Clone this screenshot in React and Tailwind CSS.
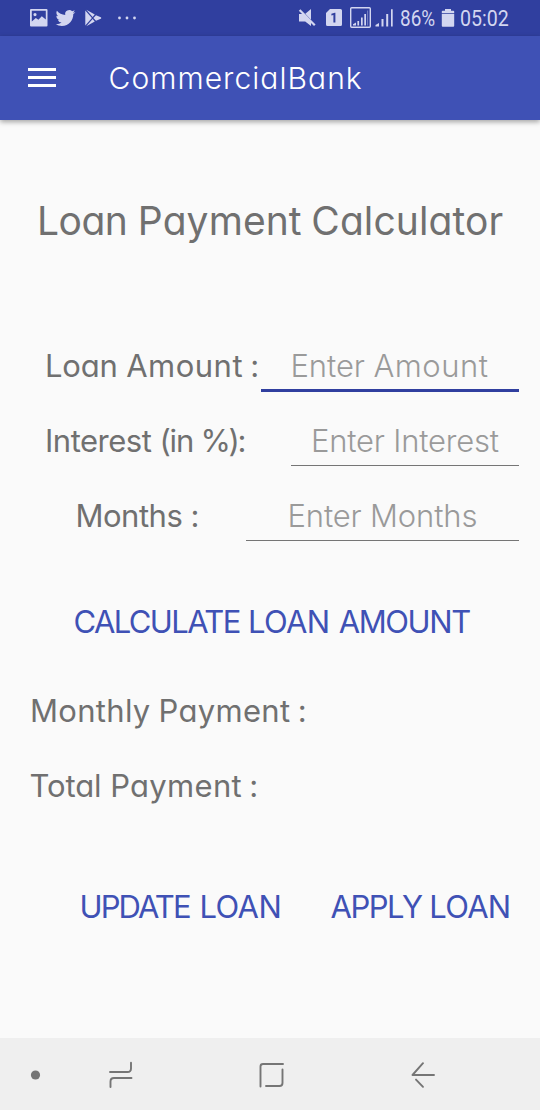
function StatusIcons() {
  return (
    <svg className="h-9 w-[150px]" viewBox="0 0 150 36" fill="#d3d6f0">
      <path
        fillRule="evenodd"
        d="M31 9h15.5a1 1 0 0 1 1 1v15.5a1 1 0 0 1-1 1H31a1 1 0 0 1-1-1V10a1 1 0 0 1 1-1zM31.8 10.8v10.6l4-3.4 2.6 1.8 3.4-3.6 4 3.4v-8.800zM35 13a1.600 1.600 0 1 1 0 3.200 1.600 1.600 0 0 1 0-3.200z"
      />
      <path
        transform="translate(55.6 8.2) scale(0.82)"
        d="M23.953 4.57a10 10 0 01-2.825.775 4.958 4.958 0 002.163-2.723c-.951.555-2.005.959-3.127 1.184a4.92 4.92 0 00-8.384 4.482C7.69 8.095 4.067 6.13 1.64 3.162a4.822 4.822 0 00-.666 2.475c0 1.71.87 3.213 2.188 4.096a4.904 4.904 0 01-2.228-.616v.06a4.923 4.923 0 003.946 4.827 4.996 4.996 0 01-2.212.085 4.936 4.936 0 004.604 3.417 9.867 9.867 0 01-6.102 2.105c-.39 0-.779-.023-1.17-.067a13.995 13.995 0 007.557 2.209c9.053 0 13.998-7.496 13.998-13.985 0-.21 0-.42-.015-.63A9.935 9.935 0 0024 4.59z"
      />
      <path d="M85.3 10.4v15.2l6.6-7.6zM86.3 9.7l6.3 7.3 2.2-2.4zM86.3 26.3l6.3-7.3 2.2 2.4zM96 15.2 93.4 18l2.6 2.8 4.8-2.1a.8.8 0 0 0 0-1.4z" />
      <circle cx="119.5" cy="18" r="1.4" />
      <circle cx="127" cy="18" r="1.4" />
      <circle cx="134.5" cy="18" r="1.4" />
    </svg>
  );
}

function SignalIcons() {
  return (
    <svg className="h-9 w-[99px]" viewBox="296 0 99 36" fill="#d3d6f0">
      <path d="M299 14h5l7 7.500v4.600l-5.800-4.600H299zM305.300 13.800l5.700-4.800v10.800z" />
      <path d="m299.600 10 15.200 15.200" stroke="#d3d6f0" strokeWidth="2.200" fill="none" />
      <path
        fillRule="evenodd"
        d="M330 9h10.5a1.5 1.5 0 0 1 1.5 1.5v14a1.5 1.5 0 0 1-1.5 1.5h-13a1.5 1.5 0 0 1-1.5-1.5V13zM331.4 13.8v1.8l2-.6v7.6h2v-9.8h-.6z"
      />
      <rect x="350.7" y="7.7" width="19.6" height="19.6" rx="1" fill="none" stroke="#d3d6f0" strokeWidth="1.4" />
      <path d="M353 25.500v-1.300l3-1.700v3zM357.400 21h1.700v4.500h-1.700zM361 17.500h1.700v8H361zM364.300 14h1.700v11.500h-1.700z" />
      <path d="M367.200 10.500h.9v15h-.9z" opacity=".5" />
      <path d="M375.5 26.5V25l3.5-2v3.5zM381.5 19h2v7.5h-2zM386.2 14h2v12.5h-2zM391 9.2h1.7v17.3H391z" />
    </svg>
  );
}

function BatteryIcon() {
  return (
    <svg className="h-9 w-[14px]" viewBox="0 0 14 36" fill="#d3d6f0">
      <path d="M4 9h6v1.800h2.400a.8.8 0 0 1 .8.8V13H.8v-1.400a.8.8 0 0 1 .8-.8H4zM.8 13.800h12.400v12a.9.9 0 0 1-.9.9H1.700a.9.9 0 0 1-.9-.9z" />
    </svg>
  );
}

function StatusBar() {
  return (
    <header className="flex h-9 items-center bg-[#303f9f] font-['Roboto',sans-serif] text-[22px] leading-9 text-[#d3d6f0]">
      <StatusIcons />
      <div className="w-[146px]" />
      <SignalIcons />
      <span className="ml-[4.5px] w-[41px] origin-left scale-x-[0.86] pt-[2px]">86%</span>
      <BatteryIcon />
      <span className="ml-[5px] origin-left scale-x-[0.89] pt-[2px]">05:02</span>
    </header>
  );
}

function AppBar() {
  return (
    <div className="flex h-[84px] items-center bg-[#3f51b5] pl-7 text-white shadow-[0_2px_5px_rgba(0,0,0,0.35)]">
      <div className="flex w-7 flex-col gap-[5px] pb-[1px]">
        <span className="h-[3px] bg-white" />
        <span className="h-[3px] bg-white" />
        <span className="h-[3px] bg-white" />
      </div>
      <h1 className="ml-[52.5px] text-[30px] font-light tracking-[1.05px]">CommercialBank</h1>
    </div>
  );
}

function NavBar() {
  return (
    <nav className="flex h-[72px] bg-[#efefef]">
      <svg className="h-[72px] w-[540px]" viewBox="0 1038 540 72" fill="none" stroke="#757575" strokeWidth="1.9" strokeLinecap="round">
        <circle cx="35.5" cy="1075" r="4.6" fill="#757575" stroke="none" />
        <path d="M110 1072h17.5q3.5 0 3.5-3.5V1062.7M131.5 1078h-17.5q-3.5 0-3.5 3.5V1087" />
        <path d="M260.5 1086.5V1066.5q0-2.5 2.5-2.500H283M282.500 1069.500V1083q0 3-3 3H266" />
        <path d="M434 1075H412.500L423 1063.200M416 1079.600l7 7.200" strokeLinejoin="round" />
      </svg>
    </nav>
  );
}

export default function App() {
  return (
    <div className="flex h-[1110px] w-[540px] flex-col overflow-hidden whitespace-nowrap bg-[#fafafa] font-['Inter',sans-serif] text-[31px] text-[#707070] [font-feature-settings:'cv11']">
      <StatusBar />
      <AppBar />
      <main className="flex flex-1 flex-col">
        <h2 className="h-[209px] pl-[37px] text-[39px] leading-[201px]">
          <span className="tracking-[-0.5px]">Loan </span>
          <span className="tracking-[0.1px]">Payment </span>
          <span className="ml-[-1.5px] tracking-[0.1px]">Calculator</span>
        </h2>

        <div className="flex h-[75px] leading-[74px]">
          <label className="w-[261px] pl-[45px]">
            <span className="tracking-[-0.2px]">Loan </span>
            <span className="tracking-[0.5px]">Amount</span>
            <span className="tracking-[-1.5px]"> :</span>
          </label>
          <div className="h-[63px] w-[258px] border-b-3 border-[#303f9f] pl-[29.5px] font-light text-[#9a9a9a]">
            <span className="tracking-[-0.1px]">Enter </span>
            <span className="tracking-[0.5px]">Amount</span>
          </div>
        </div>
        <div className="flex h-[75px] leading-[74px]">
          <label className="w-[291px] pl-[45px]">
            <span className="tracking-[-0.5px]">Interest </span>
            <span className="tracking-[-1.2px]">(in </span>
            <span className="tracking-[-2.4px]">%):</span>
          </label>
          <div className="h-[62px] w-[228px] border-b border-[#757575] pl-[20px] font-light tracking-[-0.2px] text-[#9a9a9a]">Enter Interest</div>
        </div>
        <div className="flex h-[75px] leading-[74px]">
          <label className="w-[246px] pl-[75.5px] tracking-[-0.5px]">Months :</label>
          <div className="h-[62px] w-[273px] border-b border-[#757575] pl-[41.5px] font-light tracking-[-0.15px] text-[#9a9a9a]">Enter Months</div>
        </div>

        <button className="mt-[30px] h-[75px] pl-[73.5px] text-left leading-[73px] text-[#3f51b5]">
          <span className="tracking-[-1.6px]">CALCULATE </span>
          <span className="ml-[1px] tracking-[-0.6px]">LOAN </span>
          <span className="ml-[1px] tracking-[-1.4px]">AMOUNT</span>
        </button>

        <p className="mt-[15px] h-[75px] pl-[30px] leading-[74px]">
          <span className="tracking-[0.3px]">Monthly </span>
          <span className="ml-[-1px] tracking-[0.3px]">Payment</span>
          <span className="tracking-[-1.5px]"> :</span>
        </p>
        <p className="h-[75px] pl-[29.5px] leading-[74px]">
          <span className="tracking-[-0.1px]">Total </span>
          <span className="tracking-[0.3px]">Payment</span>
          <span className="tracking-[-1.5px]"> :</span>
        </p>

        <div className="mt-[45px] flex h-[75px] leading-[73px] text-[#3f51b5]">
          <button className="w-[250px] pl-[79.5px] text-left">
            <span className="tracking-[-1.9px]">UPDATE </span>
            <span className="ml-[3px] tracking-[-0.6px]">LOAN</span>
          </button>
          <button className="pl-[80.5px] text-left">
            <span className="tracking-[-1.5px]">APPLY </span>
            <span className="ml-[0.5px] tracking-[-0.7px]">LOAN</span>
          </button>
        </div>
      </main>
      <NavBar />
    </div>
  );
}
